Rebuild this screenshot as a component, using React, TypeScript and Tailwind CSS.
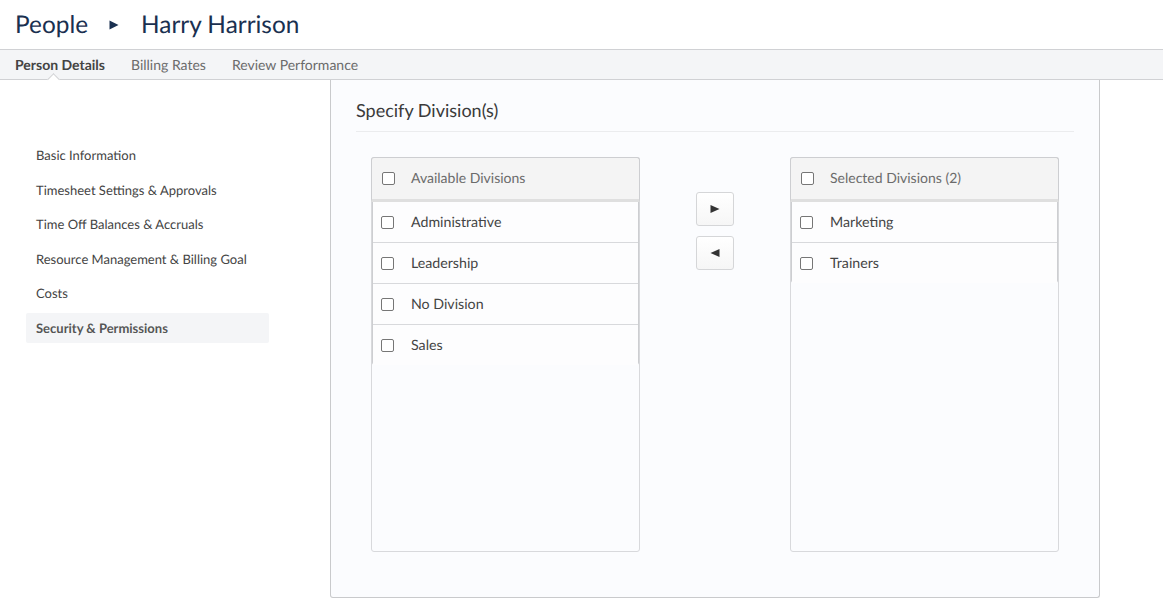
const sideItems = [
  'Basic Information',
  'Timesheet Settings & Approvals',
  'Time Off Balances & Accruals',
  'Resource Management & Billing Goal',
  'Costs',
  'Security & Permissions',
];

function Check() {
  return <span className="block w-[13px] h-[13px] shrink-0 rounded-[2px] border border-[#767676] bg-white" />;
}

function DivisionList({ title, items }: { title: string; items: string[] }) {
  return (
    <div className="w-[269px] h-[395px] rounded-[3px] border border-[#d8d9dc]">
      <div className="-m-px h-[45px] flex items-center gap-[16px] pl-[10px] pb-px rounded-t-[3px] bg-[#f4f4f4] border border-[#cdced1] border-b-[3px] border-b-[#dfdfdf] text-[14px] text-[#6b6b6b]">
        <Check />
        <span className="pb-[2px]">{title}</span>
      </div>
      <div className="mt-px rounded-b-[3px] border-x border-[#cdced1]">
        {items.map((item, idx) => (
          <div
            key={item}
            className={`flex items-center gap-[17px] pl-[8px] text-[14.2px] text-[#444444] bg-[#fdfdfe] ${idx === 0 ? 'h-[40px]' : 'h-[41px] border-t border-[#d8d9dc]'}`}
          >
            <Check />
            <span className="leading-[21px]">{item}</span>
          </div>
        ))}
      </div>
    </div>
  );
}

function MoveButton({ dir }: { dir: 'right' | 'left' }) {
  return (
    <button className="w-[38px] h-[34px] flex items-center justify-center rounded-[3px] border border-[#d5d6d8] bg-gradient-to-b from-white to-[#f6f6f6]">
      <svg width="10" height="8" viewBox="0 0 10 8">
        <path d={dir === 'right' ? 'M0.5 0 L9.5 4 L0.5 8 Z' : 'M9.5 0 L0.5 4 L9.5 8 Z'} fill="#333333" />
      </svg>
    </button>
  );
}

export default function App() {
  return (
    <div className="w-[1163px] h-[600px] overflow-hidden bg-white antialiased [text-rendering:geometricPrecision] font-['Lato','Carlito','Open_Sans',sans-serif]">
      {/* Header */}
      <div className="h-[49px] flex items-center pl-[15px] text-[24.4px] text-[#1a3050]">
        <span className="pt-[2px]">People</span>
        <svg className="ml-[21px] mr-[22px]" width="10" height="10" viewBox="0 0 10 10">
          <path d="M0.5 0.5 L9.5 5 L0.5 9.5 Z" fill="#1a3050" />
        </svg>
        <span className="pt-[2px]">Harry Harrison</span>
      </div>

      {/* Tabs */}
      <div className="relative h-[31px] flex items-center gap-[26px] pl-[15px] bg-[#f4f5f7] border-y border-[#d0d1d4] text-[14px] text-[#6b6b6b]">
        <span className="font-bold text-[#444444]">Person Details</span>
        <span>Billing Rates</span>
        <span>Review Performance</span>
        <span className="absolute left-[49px] -bottom-[5px] w-[9px] h-[9px] rotate-45 bg-white border-l border-t border-[#d0d1d4]" />
      </div>

      <div className="flex">
        {/* Sidebar */}
        <div className="w-[330px] shrink-0 pt-[60.5px] pl-[26px]">
          <div className="w-[243px] flex flex-col gap-[4.5px]">
            {sideItems.map((item, idx) => (
              <div
                key={item}
                className={`h-[30px] flex items-center pl-[10px] rounded-[2px] text-[13px] ${idx === 5 ? 'bg-[#f4f5f7] font-bold text-[#555555]' : 'text-[#444444]'}`}
              >
                <span className="pt-[1px]">{item}</span>
              </div>
            ))}
          </div>
        </div>

        {/* Panel */}
        <div className="w-[770px] h-[518px] rounded-b-[3px] border-x border-b border-[#c9cacc] bg-[#fbfcfe] px-[25px]">
          <div className="h-[52px] pt-[10px] flex items-center border-b border-[#ebecee] text-[18px] text-[#3a3a3a] w-[718px]">
            Specify Division(s)
          </div>
          <div className="flex pt-[25px] pl-[15px]">
            <DivisionList title="Available Divisions" items={['Administrative', 'Leadership', 'No Division', 'Sales']} />
            <div className="w-[150px] flex flex-col items-center gap-[10px] pt-[35px]">
              <MoveButton dir="right" />
              <MoveButton dir="left" />
            </div>
            <DivisionList title="Selected Divisions (2)" items={['Marketing', 'Trainers']} />
          </div>
        </div>
      </div>
    </div>
  );
}
